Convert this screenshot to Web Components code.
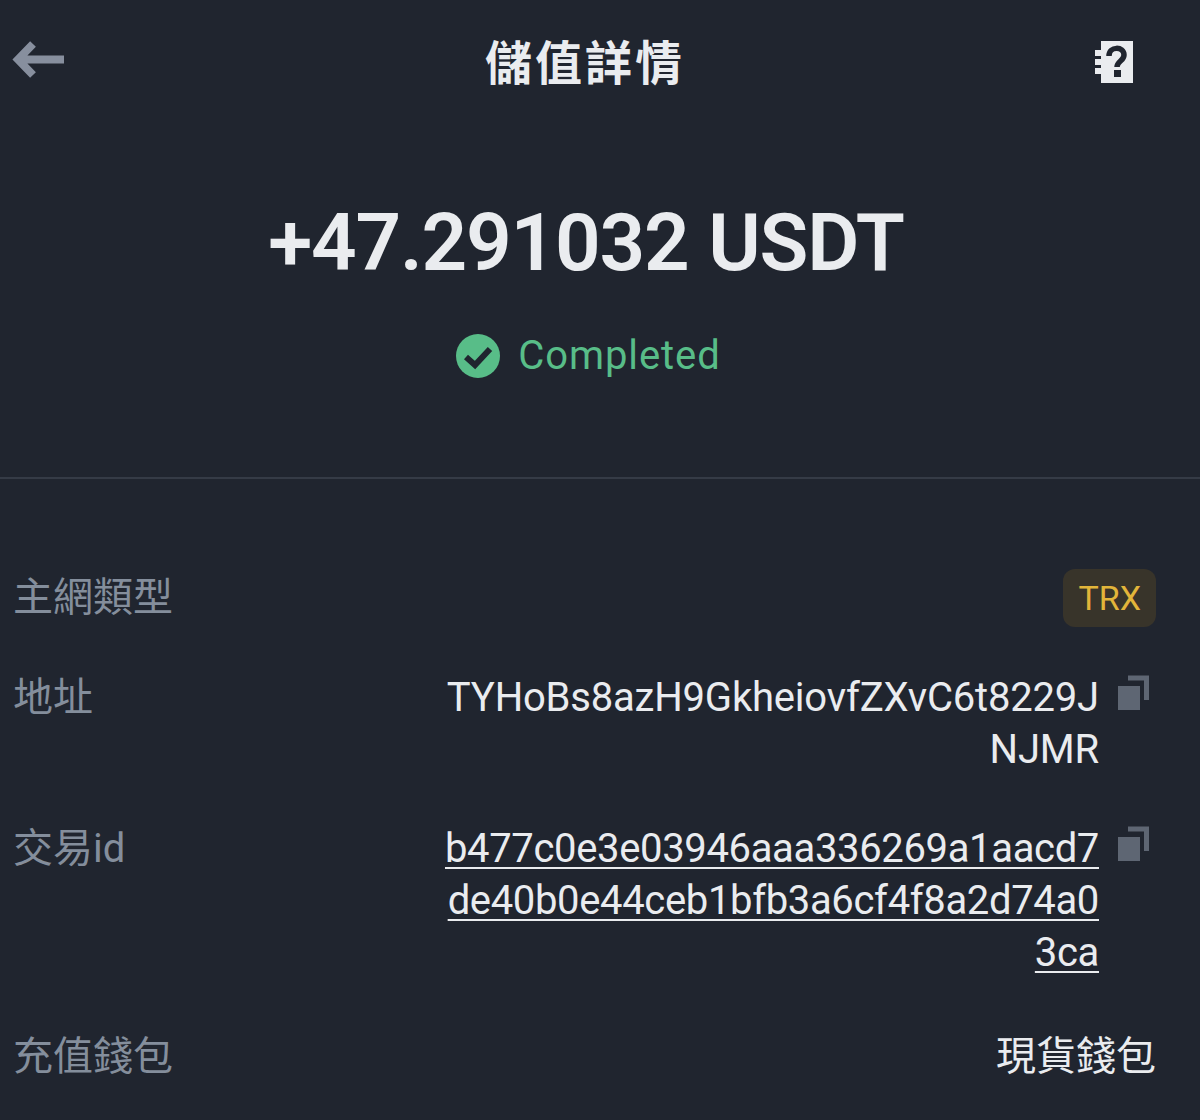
<!DOCTYPE html>
<html lang="zh-Hant">
<head>
<meta charset="utf-8">
<title>儲值詳情</title>
<style>
  html, body { margin: 0; background: #20252f; }
  body { font-family: "Roboto", "Noto Sans CJK TC", sans-serif; height: 1120px; overflow: hidden; }
</style>
</head>
<body>
<deposit-detail></deposit-detail>

<template id="top-bar-tpl">
  <style>
    :host { display: flex; align-items: center; justify-content: space-between; height: 64px; padding: 28px 66px 0 12px; }
    h1 { margin: -2px 0 0; font-size: 47px; font-weight: 700; color: #eaecef; letter-spacing: 3px; position: relative; left: 5px; }
    svg { display: block; }
    .help { margin-top: 4px; }
  </style>
  <svg width="54" height="42" viewBox="0 0 54 42"><path d="M52 20.500H6M21 5 6 20.500 21 36" fill="none" stroke="#878f9e" stroke-width="8"/></svg>
  <h1>儲值詳情</h1>
  <svg class="help" width="40" height="42" viewBox="0 0 40 42"><path fill="#eaecef" d="M7 0h32v42H7v-9H1v-6h6v-3H1v-6h6v-3H1V9h6z"/><path fill="none" stroke="#20252f" stroke-width="5.500" d="M15 15c0-10 15-10 15-1 0 6-7 6-7 12"/><rect x="20" y="29" width="7" height="7" fill="#20252f"/></svg>
</template>

<template id="amount-tpl">
  <style>
    :host { display: block; text-align: center; padding: 106px 28px 0 0; }
    .num { font-size: 80px; line-height: 90px; font-weight: 600; color: #eaecef; letter-spacing: -1.200px; word-spacing: 1px; }
    .status { display: flex; align-items: center; justify-content: center; gap: 18px; margin: 45px 0 0 5px; color: #58bd88; font-size: 40px; line-height: 46px; letter-spacing: 0.900px; }
    svg { display: block; }
  </style>
  <div class="num"><slot name="value"></slot></div>
  <div class="status">
    <svg width="44" height="44" viewBox="0 0 44 44"><circle cx="22" cy="22" r="22" fill="#58bd88"/><path d="M10 23l9 8 15-16" fill="none" stroke="#20252f" stroke-width="6"/></svg>
    <slot name="status"></slot>
  </div>
</template>

<template id="info-row-tpl">
  <style>
    :host { display: flex; justify-content: space-between; align-items: flex-start; font-size: 40px; line-height: 52px; }
    :host([short]) { align-items: center; }
    .label { color: #848e9c; white-space: nowrap; }
    .right { display: flex; align-items: flex-start; color: #eaecef; }
    .value { text-align: right; width: 660px; word-break: break-all; letter-spacing: -0.200px; }
    :host([link]) .value { letter-spacing: -0.350px; text-decoration: underline; text-decoration-thickness: 2px; text-underline-offset: 5px; }
    :host([short]) .value { width: auto; letter-spacing: 0; }
    svg { display: none; margin: 3px 7px 0 19px; }
    :host([copy]) svg { display: block; }
  </style>
  <div class="label"><slot name="label"></slot></div>
  <div class="right">
    <div class="value"><slot></slot></div>
    <svg width="31" height="36" viewBox="0 0 31 36"><path fill="#5e6673" d="M0 11h22v24H0z"/><path fill="none" stroke="#5e6673" stroke-width="5" d="M10 3h18.500v22"/></svg>
  </div>
</template>

<template id="net-tag-tpl">
  <style>
    :host { display: inline-block; background: #38342a; color: #e2b53a; border-radius: 12px; font-size: 34px; line-height: 58px; padding: 0 15px; }
  </style>
  <slot></slot>
</template>

<template id="deposit-detail-tpl">
  <style>
    :host { display: block; width: 1200px; height: 1120px; background: #20252f; font-family: "Roboto", "Noto Sans CJK TC", sans-serif; }
    hr { border: 0; height: 2px; background: #353b46; margin: 0; }
    .head { height: 477px; }
    .list { display: flex; flex-direction: column; padding: 90px 44px 0 13px; }
    .tag-row { margin-bottom: 45px; }
    .addr { margin-bottom: 47px; }
    .tx { margin-bottom: 52px; }
  </style>
  <div class="head">
    <top-bar></top-bar>
    <amount-block>
      <span slot="value">+47.291032 USDT</span>
      <span slot="status">Completed</span>
    </amount-block>
  </div>
  <hr>
  <div class="list">
    <info-row class="tag-row" short><span slot="label">主網類型</span><net-tag>TRX</net-tag></info-row>
    <info-row class="addr" copy><span slot="label">地址</span>TYHoBs8azH9GkheiovfZXvC6t8229J<br>NJMR</info-row>
    <info-row class="tx" copy link><span slot="label">交易id</span>b477c0e3e03946aaa336269a1aacd7<br>de40b0e44ceb1bfb3a6cf4f8a2d74a0<br>3ca</info-row>
    <info-row short><span slot="label">充值錢包</span>現貨錢包</info-row>
  </div>
</template>

<script>
  // every element just stamps its template into an open shadow root
  const simple = (tag, tplId) => {
    customElements.define(tag, class extends HTMLElement {
      constructor() {
        super();
        this._shadowRoot = this.attachShadow({ mode: 'open' });
        this._shadowRoot.appendChild(document.getElementById(tplId).content.cloneNode(true));
      }
    });
  };

  simple('top-bar', 'top-bar-tpl');
  simple('amount-block', 'amount-tpl');
  simple('info-row', 'info-row-tpl');
  simple('net-tag', 'net-tag-tpl');
  simple('deposit-detail', 'deposit-detail-tpl');
</script>
</body>
</html>
